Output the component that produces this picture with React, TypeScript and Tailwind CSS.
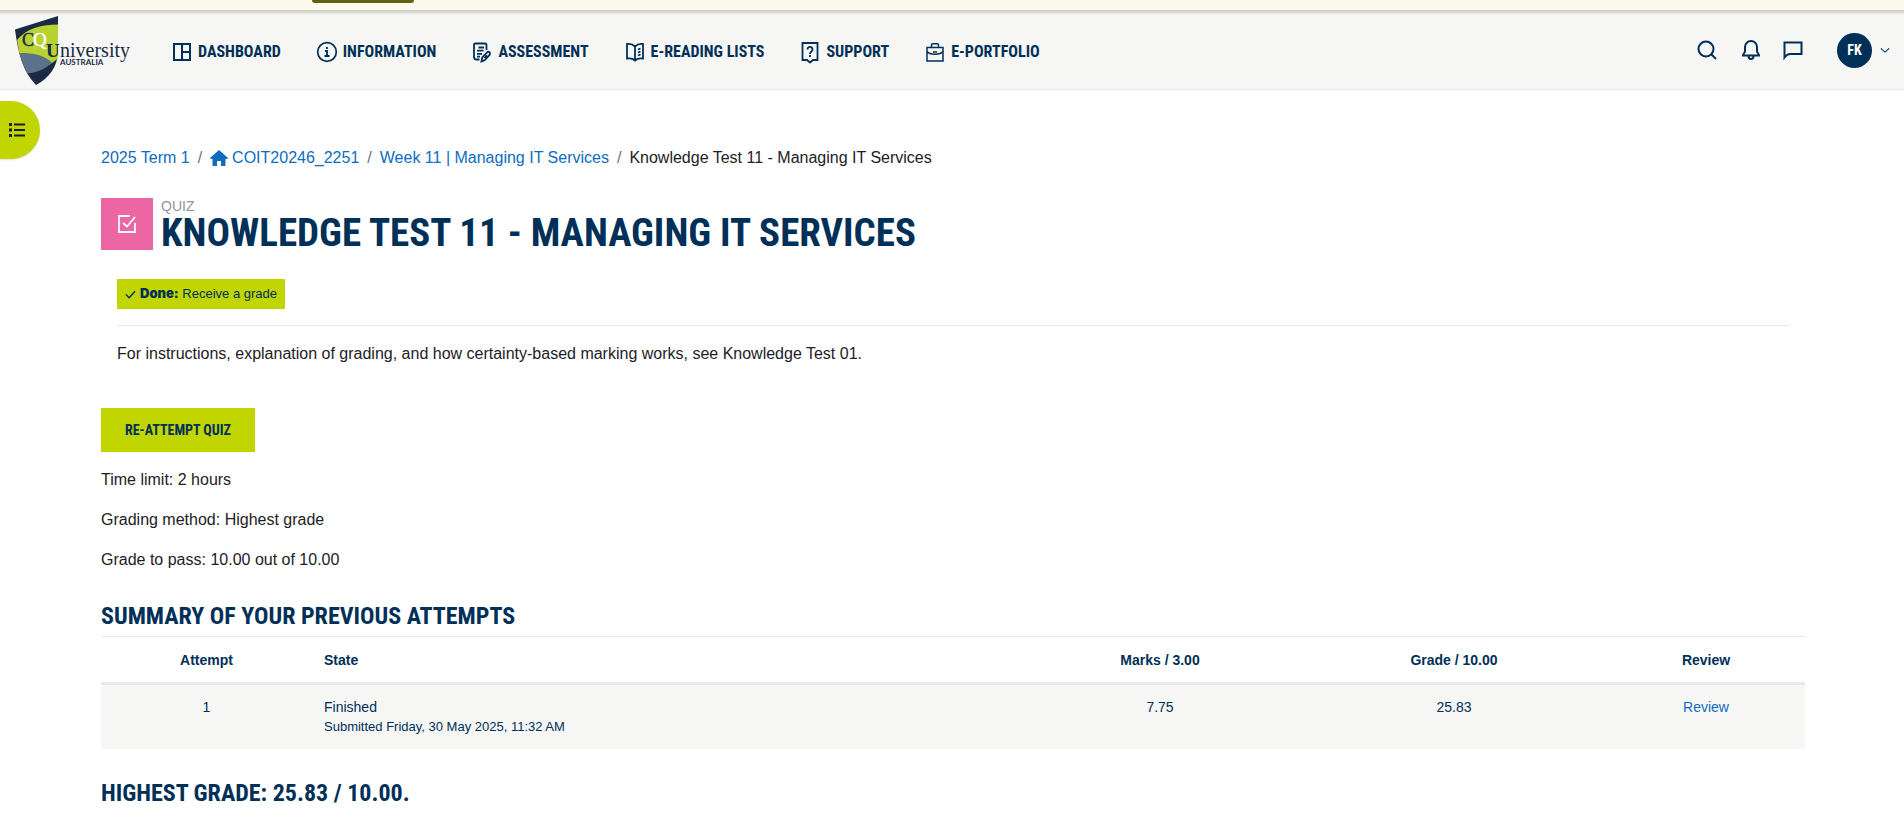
import type { ReactNode } from "react";

const body = "font-['Liberation_Sans',Arial,sans-serif]";
const condensed = "font-['Roboto_Condensed','Liberation_Sans_Narrow',sans-serif] font-bold uppercase";

function Icon({ size = 24, width = 2, children }: { size?: number; width?: number; children: ReactNode }) {
  return (
    <svg
      aria-hidden="true"
      width={size}
      height={size}
      viewBox="0 0 24 24"
      fill="none"
      stroke="currentColor"
      strokeWidth={width}
      className="shrink-0"
    >
      {children}
    </svg>
  );
}

function Logo() {
  return (
    <svg role="img" aria-label="CQUniversity Australia" width="116" height="72" viewBox="0 0 116 72">
      <path d="M0 15.500 43 2v34c0 17-9 28-22 35C8 58 3 39 0 15.500Z" fill="#1a2a45" />
      <path d="M2 26C12 14 27 10.500 43 10.500V44c-3 3-6 5-9 7C24 41 14 39 4.500 39.500Z" fill="#b8d232" />
      <path d="M4.500 39.500C19 38 30 42 37 48.500 31 55 22 58.500 12.500 59.500 9 53 6.500 47 4.500 39.500Z" fill="#5c718a" />
      <g fontFamily="'Liberation Serif', serif">
        <text x="7" y="32" fontSize="18" fill="#1a2a45" stroke="#1a2a45" strokeWidth=".4">C</text>
        <text x="18" y="32" fontSize="19" fill="#fff" stroke="#fff" strokeWidth=".4">Q</text>
        <text x="31" y="43" fontSize="19" fontWeight="700" fill="#1a2a45">U</text>
        <text x="45" y="43" fontSize="20" fill="#1a2a45">niversity</text>
      </g>
      <text x="45" y="51" fontFamily="Lato, sans-serif" fontSize="8" fontWeight="700" fill="#1a2a45">AUSTRALIA</text>
    </svg>
  );
}

const nav: { label: string; icon: ReactNode }[] = [
  {
    label: "Dashboard",
    icon: <Icon><path d="M4 4h16v16H4zM12 4v16M12 12h8" /></Icon>,
  },
  {
    label: "Information",
    icon: (
      <Icon>
        <circle cx="12" cy="12" r="9.300" strokeWidth="1.700" />
        <path d="M10 11h2v5M9.500 16h5M12 7v2" strokeWidth="1.800" />
      </Icon>
    ),
  },
  {
    label: "Assessment",
    icon: (
      <Icon width={1.8}>
        <path d="M9.500 19.500h-3c-1.500 0-2.500-1-2.500-2.500V4.500C4 4 4.300 3.500 5 3.500h10c.7 0 1.500.6 1.500 1.500v5M8.500 7.500h5.500M7 10.700h6.500M7 13.800h5M7 16.700h3" />
        <path d="m11.500 21.500.8-4 5-5.300c1.500-1.200 3.500.5 2.500 2.500l-5 5.300Zm3-3.500 2.500-2.700" />
      </Icon>
    ),
  },
  {
    label: "E-Reading Lists",
    icon: (
      <Icon width={1.8}>
        <path d="M12 6.500C9.500 4 7 3.500 4 4v14.500c3-.5 6 0 8 2 2-2 5-2.500 8-2V4c-3-.5-5.500 0-8 2.500Zm0 0v14M15 9.500l2.500-1M15 12.500l2.500-1M15 15.500l2.500-1" />
      </Icon>
    ),
  },
  {
    label: "Support",
    icon: (
      <Icon width={1.8}>
        <path d="M4.500 3h15v17H15l-3 2.500L9 20H4.500ZM9.500 9.500c0-3.500 5-3.500 5 0 0 2-2.500 2-2.500 4.500M12 15v2" />
      </Icon>
    ),
  },
  {
    label: "E-Portfolio",
    icon: (
      <Icon width={1.5}>
        <path d="M4 7.500h16v13.500h-16ZM8.500 7V5c0-.8.6-1.300 1.300-1.300h4.400c.7 0 1.300.5 1.300 1.300v2M4 11.500c2.500 3.500 13.500 3.500 16 0M10 12h4" />
      </Icon>
    ),
  },
];

function Header() {
  return (
    <header className="flex h-20 items-center border-b border-[#e9e9e8] bg-[#f6f6f4] bg-[linear-gradient(to_bottom,#c9c9c1,#f6f6f4_5px)] pr-[14px] pl-[15px] text-[#003057]">
      <a href="#home" className="shrink-0">
        <Logo />
      </a>
      <nav className="ml-[39px] flex items-center gap-[34px] pt-1">
        {nav.map((item) => (
          <a key={item.label} href={"#" + item.label} className={`${condensed} flex items-center gap-1 text-base leading-6 whitespace-nowrap`}>
            {item.icon}
            {item.label}
          </a>
        ))}
      </nav>
      <div className="ml-auto flex items-center pt-px">
        <button type="button" aria-label="Search" className="mr-5">
          <Icon><circle cx="11" cy="11" r="7.500" /><path d="m16.500 16.500 4.500 4.500" /></Icon>
        </button>
        <button type="button" aria-label="Notifications" className="mr-[18px]">
          <Icon><path d="M4 17.500h16c0-2-2-2.500-2-4.500V9a6 6 0 0 0-12 0v4c0 2-2 2.500-2 4.500ZM9.500 18c0 4 5 4 5 0" /></Icon>
        </button>
        <button type="button" aria-label="Messages" className="mr-8">
          <Icon><path d="M3.500 19.500V4.500h17V16H9c-2.500 0-4 1.500-5.500 3.500Z" /></Icon>
        </button>
        <button type="button" aria-label="User menu" className="flex items-center gap-2">
          <span className={`${condensed} flex size-[35px] items-center justify-center rounded-full bg-[#003057] text-sm leading-4 text-white`}>FK</span>
          <Icon size={10} width={2.5}><path d="m2 8 10 9 10-9" /></Icon>
        </button>
      </div>
    </header>
  );
}

function Slash() {
  return <span className="px-2 text-[#6a737b]">/</span>;
}

function Breadcrumb() {
  return (
    <nav aria-label="Breadcrumb" className="flex items-center text-base leading-6 text-[#0f6cbf]">
      <a href="#term">2025 Term 1</a>
      <Slash />
      <a href="#course" className="flex items-center gap-1">
        <svg aria-hidden="true" width="18" height="16" viewBox="0 0 18 16" fill="currentColor">
          <path d="M9 0 0 8l1 1h1.500v6c0 .6.400 1 1 1H7v-5h4v5h3.500c.6 0 1-.4 1-1V9H17l1-1Z" />
        </svg>
        COIT20246_2251
      </a>
      <Slash />
      <a href="#week">Week 11 | Managing IT Services</a>
      <Slash />
      <span className="text-[#1d2125]">Knowledge Test 11 - Managing IT Services</span>
    </nav>
  );
}

const cell = "px-3 py-3 text-center align-top";

function Attempts() {
  return (
    <table className="w-full table-fixed border-collapse text-sm leading-5 text-[#003057]">
      <colgroup>
        <col className="w-[211px]" />
        <col />
        <col className="w-[282px]" />
        <col className="w-[306px]" />
        <col className="w-[198px]" />
      </colgroup>
      <thead>
        <tr className="h-[47px] border-t border-b-3 border-t-[#e9e9e8] border-b-[#e9e9e8]">
          <th className="px-3 text-center">Attempt</th>
          <th className="px-3 text-left">State</th>
          <th className="px-3 text-center">Marks / 3.00</th>
          <th className="px-3 text-center">Grade / 10.00</th>
          <th className="px-3 text-center">Review</th>
        </tr>
      </thead>
      <tbody>
        <tr className="bg-[#f6f6f4]">
          <td className={cell}>1</td>
          <td className="px-3 py-3 text-left align-top">
            Finished
            <span className="block text-[13px]">Submitted Friday, 30 May 2025, 11:32 AM</span>
          </td>
          <td className={cell}>7.75</td>
          <td className={cell}>25.83</td>
          <td className={cell}>
            <a href="#review" className="text-[#0f6cbf]">Review</a>
          </td>
        </tr>
      </tbody>
    </table>
  );
}

export default function App() {
  return (
    <div className={`${body} min-h-screen bg-white text-[#1d2125]`}>
      <div className="flex h-[10px] items-start overflow-hidden bg-[#fcfaec] pl-[312px]">
        <div className="h-[3px] w-[102px] rounded-b-[14px] bg-[#5f6210]" />
      </div>
      <Header />
      <button
        type="button"
        aria-label="Open course index"
        className="absolute top-[101px] left-0 flex h-[58px] w-10 items-center rounded-r-full bg-[#c1d500] pl-[9px] shadow-sm"
      >
        <svg aria-hidden="true" width="16" height="14" viewBox="0 0 16 14" fill="#1d2125">
          <path d="M0 0h3v3H0zM0 5.500h3v3H0zM0 11h3v3H0zM5 .5h11v2H5zM5 6h11v2H5zM5 11.500h11v2H5z" />
        </svg>
      </button>
      <main className="pt-14 pr-[99px] pb-4 pl-[101px]">
        <Breadcrumb />
        <div className="mt-7 flex h-[52px] items-start gap-2">
          <div className="flex size-[52px] shrink-0 items-center justify-center bg-[#eb66a2] text-white">
            <Icon width={1.8}><path d="M15 4H4v16h16v-9M8 11l4 3.500L20 5" /></Icon>
          </div>
          <div>
            <div className="text-sm leading-4 text-[#8f959e] uppercase">Quiz</div>
            <h1 className={`${condensed} text-[39px] leading-[38px] whitespace-nowrap text-[#003057]`}>
              Knowledge Test 11 - Managing IT Services
            </h1>
          </div>
        </div>
        <section className="mt-[29px] px-4">
          <div className="flex">
            <div className="flex h-[30px] items-center gap-1 bg-[#c1d500] px-2 text-[13px] text-[#003057]">
              <Icon size={11} width={3}><path d="m2 12 7 7L22 5" /></Icon>
              <span><strong className="font-['Inter',sans-serif] font-black">Done:</strong> Receive a grade</span>
            </div>
          </div>
          <hr className="mt-4 border-[#e9e9e8]" />
          <p className="mt-4 text-base leading-6">
            For instructions, explanation of grading, and how certainty-based marking works, see Knowledge Test 01.
          </p>
        </section>
        <button type="button" className={`${condensed} mt-[42px] h-11 bg-[#c1d500] px-6 text-sm text-[#003057] shadow-xs`}>
          Re-attempt quiz
        </button>
        <div className="mt-4 space-y-4 text-base leading-6">
          <p>Time limit: 2 hours</p>
          <p>Grading method: Highest grade</p>
          <p>Grade to pass: 10.00 out of 10.00</p>
        </div>
        <h2 className={`${condensed} mt-7 mb-1 text-2xl leading-8 text-[#003057]`}>Summary of your previous attempts</h2>
        <Attempts />
        <h2 className={`${condensed} mt-7 text-2xl leading-8 text-[#003057]`}>Highest grade: 25.83 / 10.00.</h2>
      </main>
    </div>
  );
}
